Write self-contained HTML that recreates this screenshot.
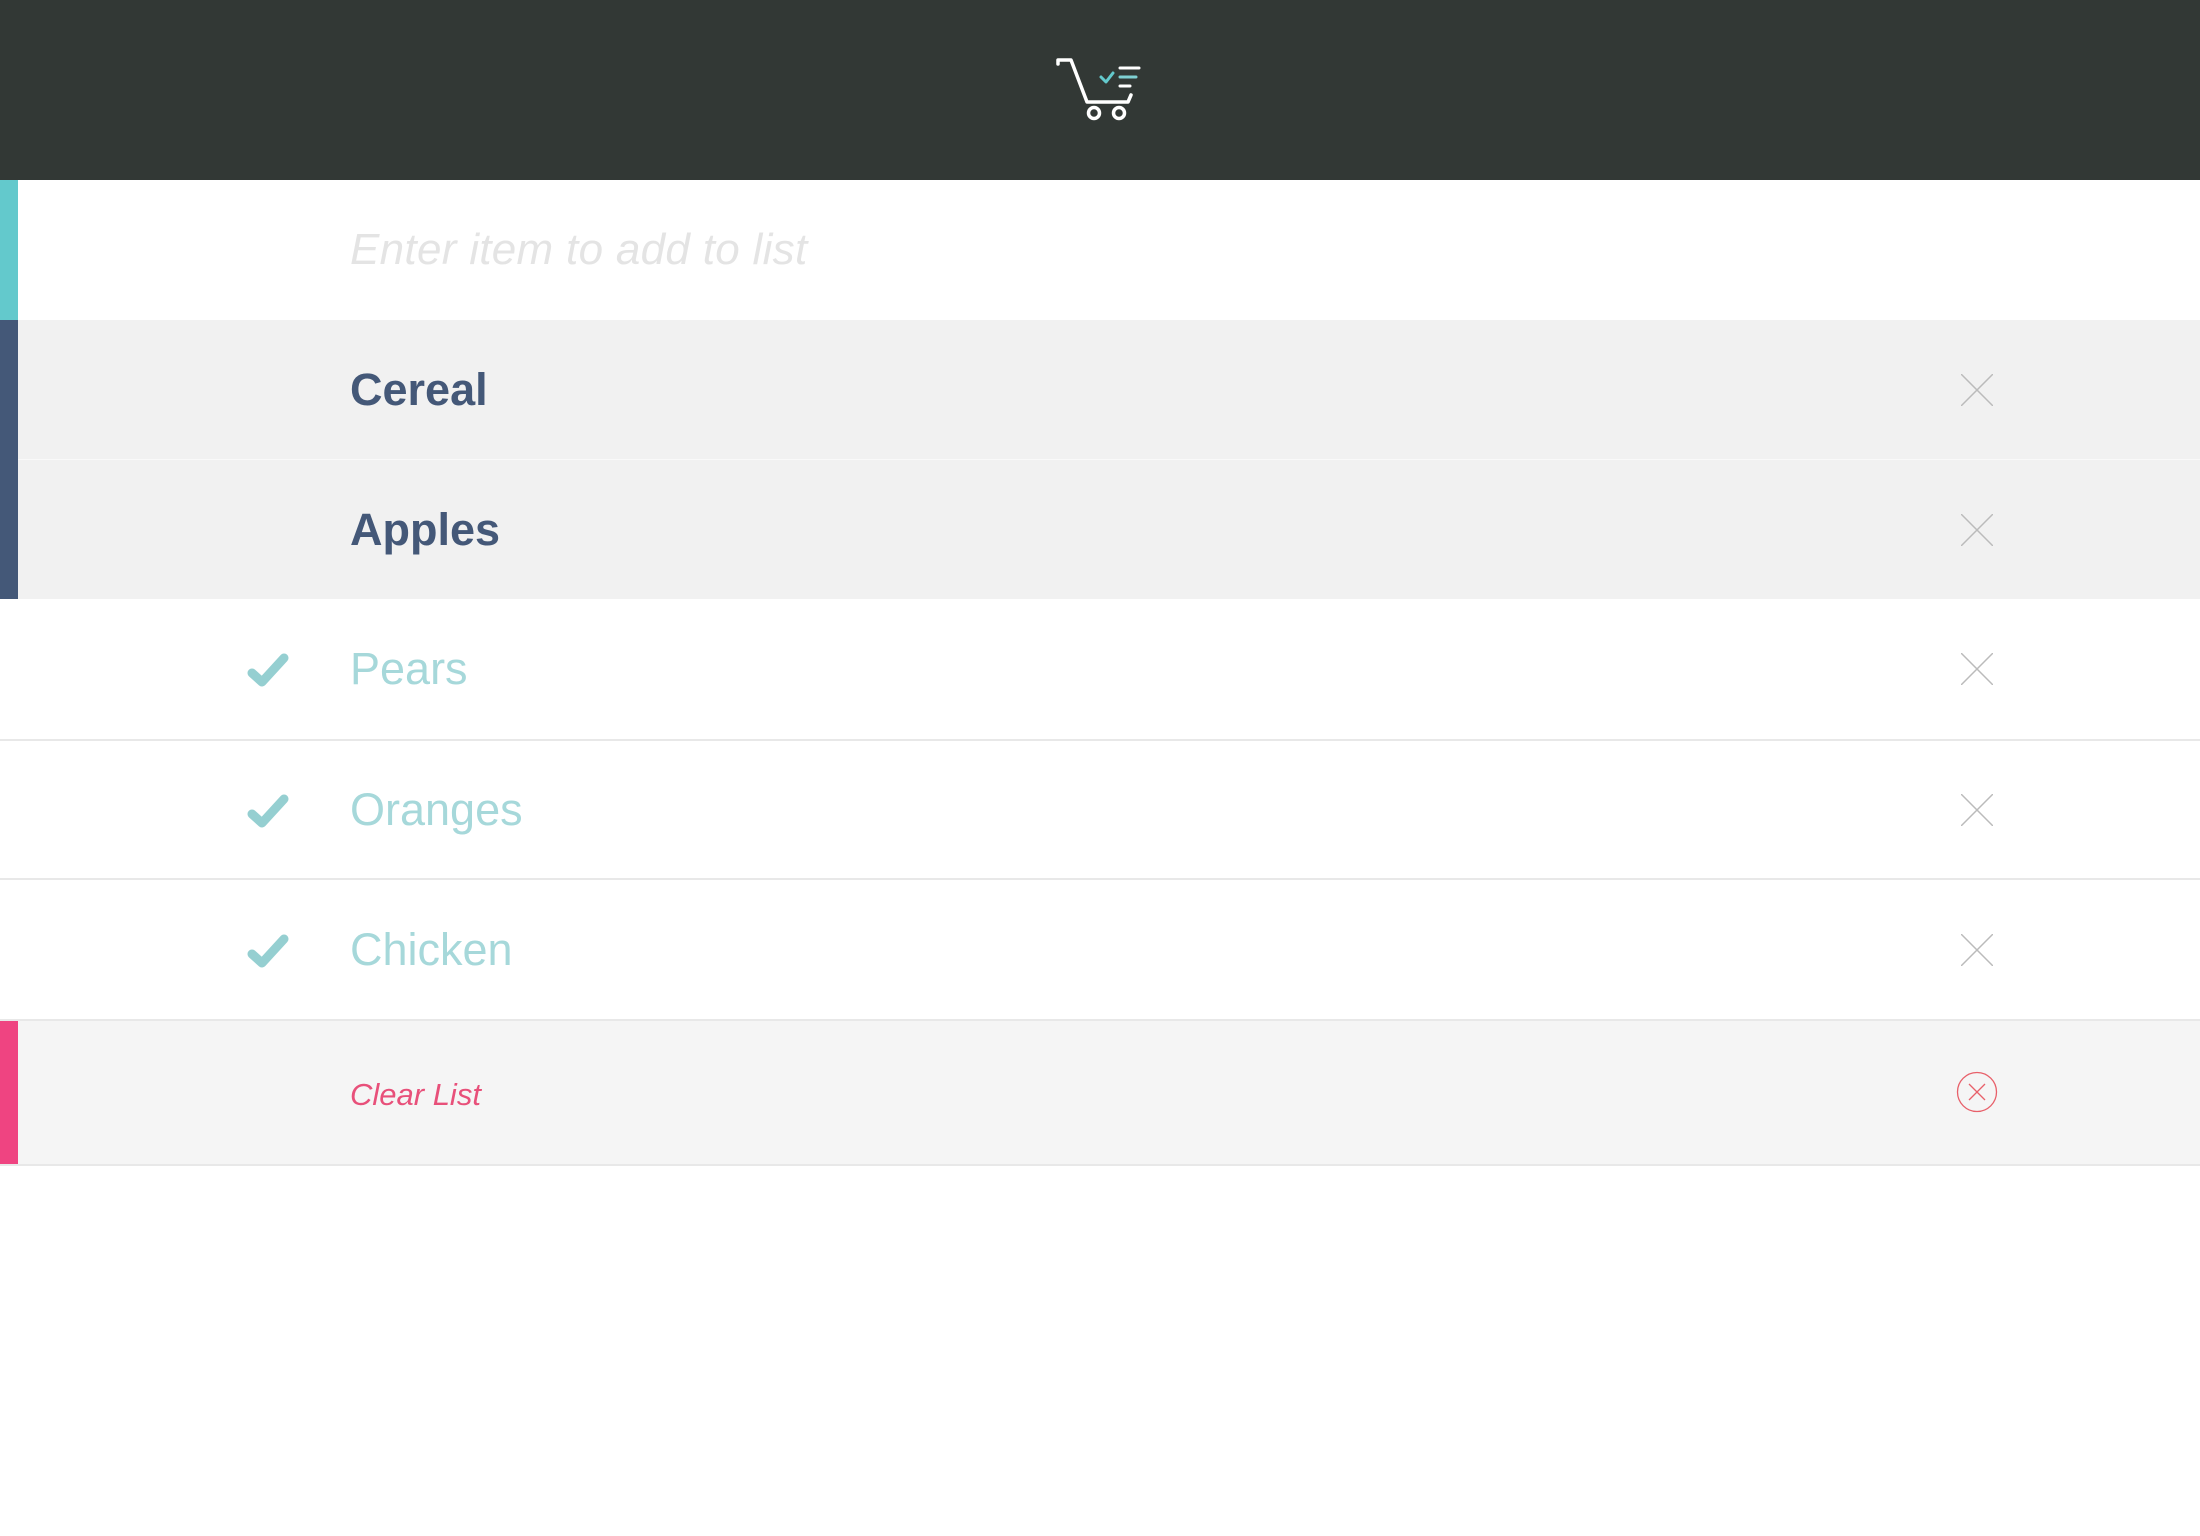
<!DOCTYPE html>
<html><head><meta charset="utf-8"><style>
body{margin:0;width:2200px;height:1536px;background:#fff;font-family:"Liberation Sans",sans-serif;position:relative;overflow:hidden}
.hdr{position:absolute;left:0;top:0;width:2200px;height:180px;background:#323835}
.row{position:absolute;left:0;width:2200px;box-sizing:border-box}
.bar{position:absolute;left:0;top:0;bottom:0;width:18px}
.t{position:absolute;left:350px;top:50%;transform:translateY(-50%);white-space:nowrap}
.x{position:absolute;left:1961px;top:50%;margin-top:-16px}
.chk{position:absolute;left:246px;top:50%;margin-top:-18px}
</style></head><body>
<div class="hdr">
<svg width="2200" height="180" style="position:absolute;left:0;top:0" fill="none" stroke-linecap="round" stroke-linejoin="round">
<path d="M1058 64 V60 H1071 L1087 102 H1128 L1131 95" stroke="#fff" stroke-width="3.5"/>
<circle cx="1094" cy="113" r="5.5" stroke="#fff" stroke-width="3.5"/>
<circle cx="1119" cy="113" r="5.5" stroke="#fff" stroke-width="3.5"/>
<path d="M1101 77 L1106 82 L1113 73" stroke="#63c9cc" stroke-width="3"/>
<path d="M1120 68 H1139" stroke="#fff" stroke-width="3"/>
<path d="M1120 77 H1136" stroke="#7fd0d2" stroke-width="3"/>
<path d="M1120 86 H1130" stroke="#fff" stroke-width="3"/>
</svg>
</div>
<div class="row" style="top:180px;height:140px;background:#fff"><div class="bar" style="background:#63c9cc"></div>
<div class="t" style="font-size:44px;font-style:italic;color:#e4e4e4;letter-spacing:0.3px">Enter item to add to list</div></div>
<div class="row" style="top:320px;height:140px;background:#f1f1f1">
<div style="position:absolute;left:18px;right:0;bottom:0;height:1px;background:#f9f9f9"></div>
<div class="t" style="font-size:45px;font-weight:bold;color:#445878">Cereal</div>
<svg class="x" width="32" height="32"><path d="M0 0L32 32M32 0L0 32" stroke="#bbb" stroke-width="1.5"/></svg></div>
<div class="row" style="top:460px;height:139px;background:#f1f1f1">
<div class="t" style="font-size:45px;font-weight:bold;color:#445878">Apples</div>
<svg class="x" width="32" height="32"><path d="M0 0L32 32M32 0L0 32" stroke="#bbb" stroke-width="1.5"/></svg></div>
<div style="position:absolute;left:0;top:320px;width:18px;height:279px;background:#445878"></div>
<div class="row" style="top:599px;height:142px;border-bottom:2px solid #e8e8e8">
<svg class="chk" width="44" height="36"><path d="M6 22 L16 31 L38 7" stroke="#95cfd1" stroke-width="9" fill="none" stroke-linecap="round" stroke-linejoin="round"/></svg>
<div class="t" style="font-size:45px;color:#a6d8da">Pears</div>
<svg class="x" width="32" height="32"><path d="M0 0L32 32M32 0L0 32" stroke="#bbb" stroke-width="1.5"/></svg></div>
<div class="row" style="top:741px;height:139px;border-bottom:2px solid #e8e8e8">
<svg class="chk" width="44" height="36"><path d="M6 22 L16 31 L38 7" stroke="#95cfd1" stroke-width="9" fill="none" stroke-linecap="round" stroke-linejoin="round"/></svg>
<div class="t" style="font-size:45px;color:#a6d8da">Oranges</div>
<svg class="x" width="32" height="32"><path d="M0 0L32 32M32 0L0 32" stroke="#bbb" stroke-width="1.5"/></svg></div>
<div class="row" style="top:880px;height:141px;border-bottom:2px solid #e8e8e8">
<svg class="chk" width="44" height="36"><path d="M6 22 L16 31 L38 7" stroke="#95cfd1" stroke-width="9" fill="none" stroke-linecap="round" stroke-linejoin="round"/></svg>
<div class="t" style="font-size:45px;color:#a6d8da">Chicken</div>
<svg class="x" width="32" height="32"><path d="M0 0L32 32M32 0L0 32" stroke="#bbb" stroke-width="1.5"/></svg></div>
<div class="row" style="top:1021px;height:145px;background:#f5f5f5;border-bottom:2px solid #e8e8e8"><div class="bar" style="background:#ef4481"></div>
<div class="t" style="font-size:31px;font-style:italic;color:#e8507a;margin-top:2px">Clear List</div>
<svg style="position:absolute;left:1956px;top:50px" width="42" height="42"><circle cx="21" cy="21" r="19.5" stroke="#e8606a" stroke-width="1.3" fill="none"/><path d="M13 13L29 29M29 13L13 29" stroke="#e8606a" stroke-width="1.3"/></svg></div>
</body></html>
